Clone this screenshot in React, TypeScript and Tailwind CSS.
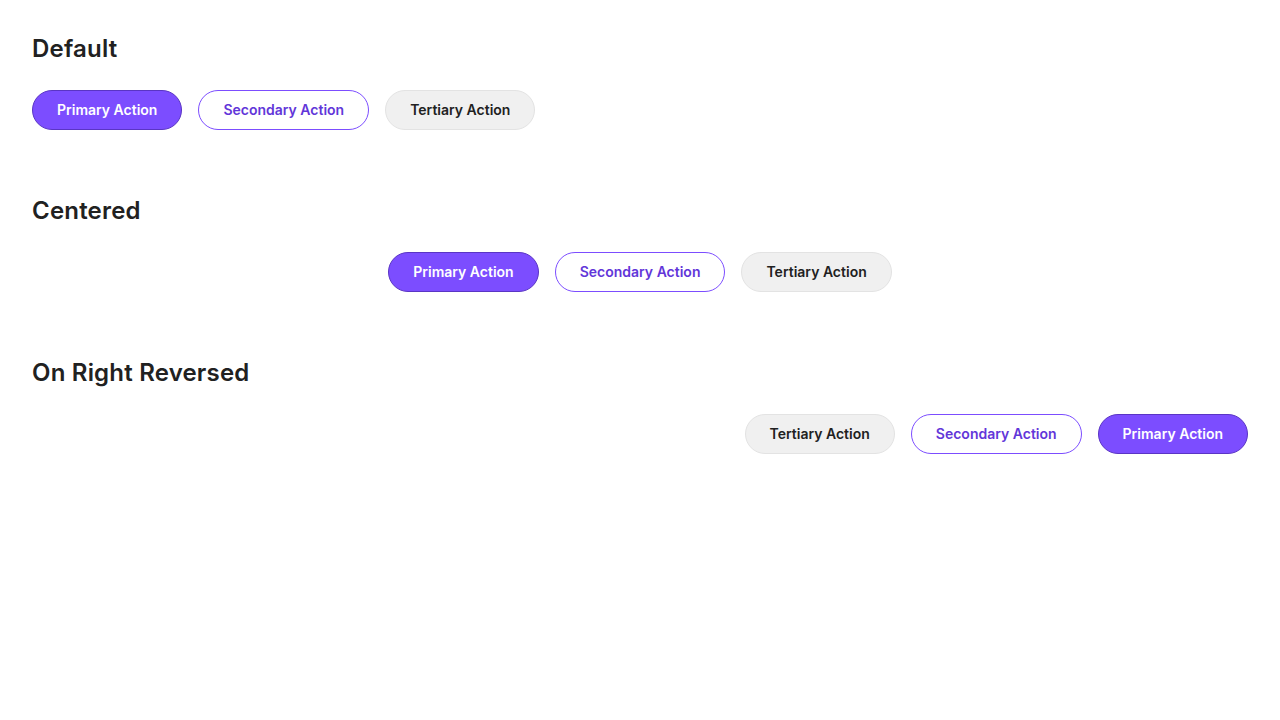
import React from 'react';

type Kind = 'primary' | 'secondary' | 'tertiary';

const styles: Record<Kind, string> = {
  primary: 'bg-[#7c4dff] border-[#5a35c4] text-white',
  secondary: 'bg-white border-[#7c4dff] text-[#6236d9]',
  tertiary: 'bg-[#f0f0f0] border-[#e3e3e3] text-[#212121]',
};

const labels: Record<Kind, string> = {
  primary: 'Primary Action',
  secondary: 'Secondary Action',
  tertiary: 'Tertiary Action',
};

const ActionButton: React.FC<{ kind: Kind }> = ({ kind }) => (
  <button
    className={`h-10 px-6 rounded-full border text-sm font-semibold leading-none ${styles[kind]}`}
  >
    {labels[kind]}
  </button>
);

const Section: React.FC<{ title: string; align: string; order: Kind[] }> = ({ title, align, order }) => (
  <section className="mb-16 last:mb-0">
    <h2 className="text-2xl leading-8 font-semibold text-[#212121] tracking-[0.2px] pt-px mb-[25px]">{title}</h2>
    <div className={`flex gap-4 ${align}`}>
      {order.map((k) => (
        <ActionButton key={k} kind={k} />
      ))}
    </div>
  </section>
);

export default function App() {
  return (
    <div className="min-h-screen bg-white p-8 font-['Inter',sans-serif]">
      <Section title="Default" align="justify-start" order={['primary', 'secondary', 'tertiary']} />
      <Section title="Centered" align="justify-center" order={['primary', 'secondary', 'tertiary']} />
      <Section title="On Right Reversed" align="justify-end" order={['tertiary', 'secondary', 'primary']} />
    </div>
  );
}
